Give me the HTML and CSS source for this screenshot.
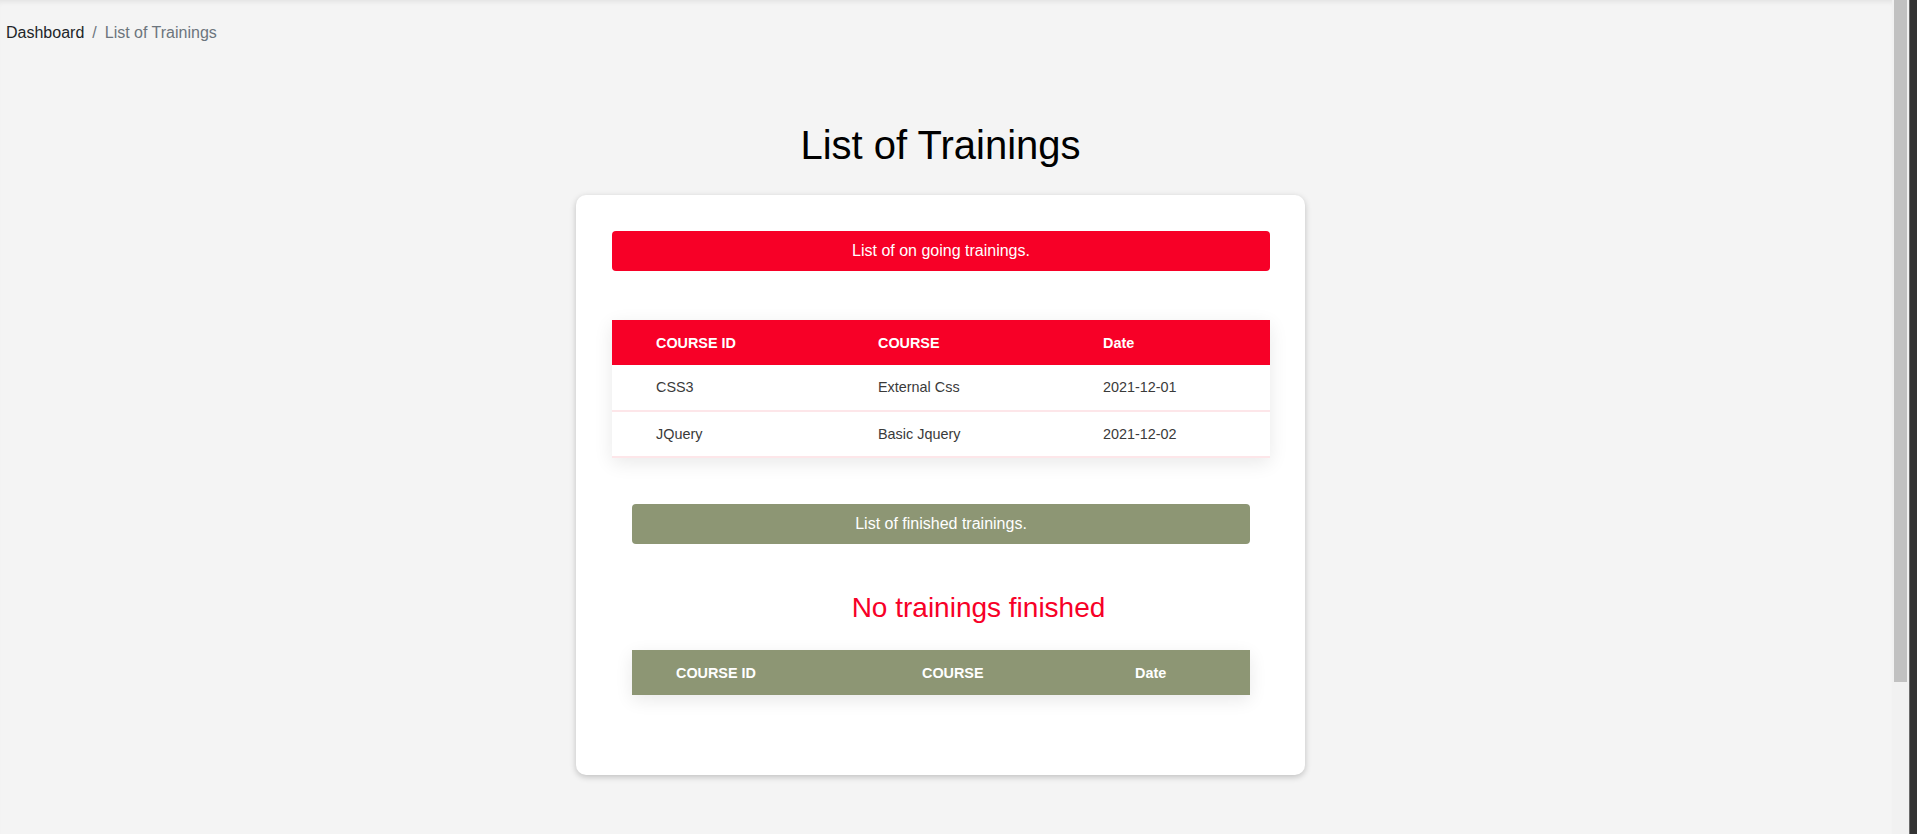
FILE: index.html
```html
<!DOCTYPE html>
<html lang="en">
<head>
<meta charset="utf-8">
<title>List of Trainings</title>
<link rel="stylesheet" href="styles.css">
</head>
<body>
<div class="page">
  <main class="main">
    <nav class="crumbs">
      <span class="crumb-link">Dashboard</span><span class="sep">/</span><span class="crumb-active">List of Trainings</span>
    </nav>
    <h1 class="title">List of Trainings</h1>
    <section class="card">
      <div class="banner banner-red">List of on going trainings.</div>
      <table class="tbl tbl-red">
        <colgroup><col class="r1"><col class="r2"><col class="r3"></colgroup>
        <thead>
          <tr><th>COURSE ID</th><th>COURSE</th><th>Date</th></tr>
        </thead>
        <tbody>
          <tr><td>CSS3</td><td>External Css</td><td>2021-12-01</td></tr>
          <tr><td>JQuery</td><td>Basic Jquery</td><td>2021-12-02</td></tr>
        </tbody>
      </table>
      <div class="banner banner-green">List of finished trainings.</div>
      <h3 class="empty">No trainings finished</h3>
      <table class="tbl tbl-green">
        <colgroup><col class="g1"><col class="g2"><col class="g3"></colgroup>
        <thead>
          <tr><th>COURSE ID</th><th>COURSE</th><th>Date</th></tr>
        </thead>
      </table>
    </section>
  </main>
  <div class="scrollbar"><div class="thumb"></div></div>
  <div class="edge"></div>
</div>
</body>
</html>
```

FILE: styles.css
```css
html, body {
  margin: 0;
  padding: 0;
  height: 100%;
}

body {
  font-family: "Liberation Sans", Arial, sans-serif;
  background: #f4f4f4;
  color: #212529;
  overflow: hidden;
}

.page {
  display: flex;
  height: 834px;
}

.main {
  flex: 1;
  display: flex;
  flex-direction: column;
  align-items: center;
  padding-right: 11px;
  box-shadow: inset 0 5px 5px -3px rgba(0, 0, 0, 0.07);
  min-width: 0;
}

.crumbs {
  align-self: stretch;
  padding: 21px 0 0 6px;
  font-size: 16px;
  line-height: 24px;
}

.crumb-link {
  color: #212529;
}

.sep {
  color: #6c757d;
  padding: 0 8px;
}

.crumb-active {
  color: #6c757d;
}

.title {
  margin: 76px 0 0;
  font-size: 40px;
  line-height: 48px;
  font-weight: normal;
  color: #000;
}

.card {
  margin-top: 26px;
  width: 729px;
  box-sizing: border-box;
  padding: 36px 35px 80px 36px;
  background: #fff;
  border-radius: 10px;
  box-shadow: 0 2px 6px rgba(0, 0, 0, 0.22);
}

.banner {
  height: 40px;
  line-height: 40px;
  text-align: center;
  color: #fff;
  font-size: 16px;
  border-radius: 4px;
}

.banner-red {
  background: #f70027;
}

.banner-green {
  background: #8d9674;
  margin: 46px 20px 0;
}

.tbl {
  border-collapse: collapse;
  table-layout: fixed;
  font-size: 14.4px;
  box-shadow: 0 5px 18px rgba(0, 0, 0, 0.09);
}

.tbl th {
  height: 45px;
  padding: 0 0 0 44px;
  text-align: left;
  font-weight: bold;
  color: #fff;
}

.tbl td {
  height: 44.5px;
  padding: 0 0 0 44px;
  color: #3a3a3a;
}

.tbl tbody tr {
  border-bottom: 2px solid #fde6e9;
}

.tbl-red {
  width: 658px;
  margin-top: 49px;
}

.tbl-red th {
  background: #f70027;
}

.r1 { width: 222px; }
.r2 { width: 225px; }
.r3 { width: 211px; }

.tbl-green {
  width: 618px;
  margin: 25px 20px 0;
}

.tbl-green th {
  background: #8d9674;
}

.g1 { width: 246px; }
.g2 { width: 213px; }
.g3 { width: 159px; }

.empty {
  margin: 47px 0 0;
  padding-left: 75px;
  text-align: center;
  font-size: 28px;
  line-height: 34px;
  font-weight: normal;
  color: #f70027;
}

.scrollbar {
  width: 17px;
  box-sizing: border-box;
  padding: 0 2px;
  background: #f1f1f1;
}

.thumb {
  height: 682px;
  background: #c1c1c1;
}

.edge {
  width: 8px;
  box-sizing: border-box;
  background: #333;
  border-left: 1px solid #6a6a6a;
}
```
